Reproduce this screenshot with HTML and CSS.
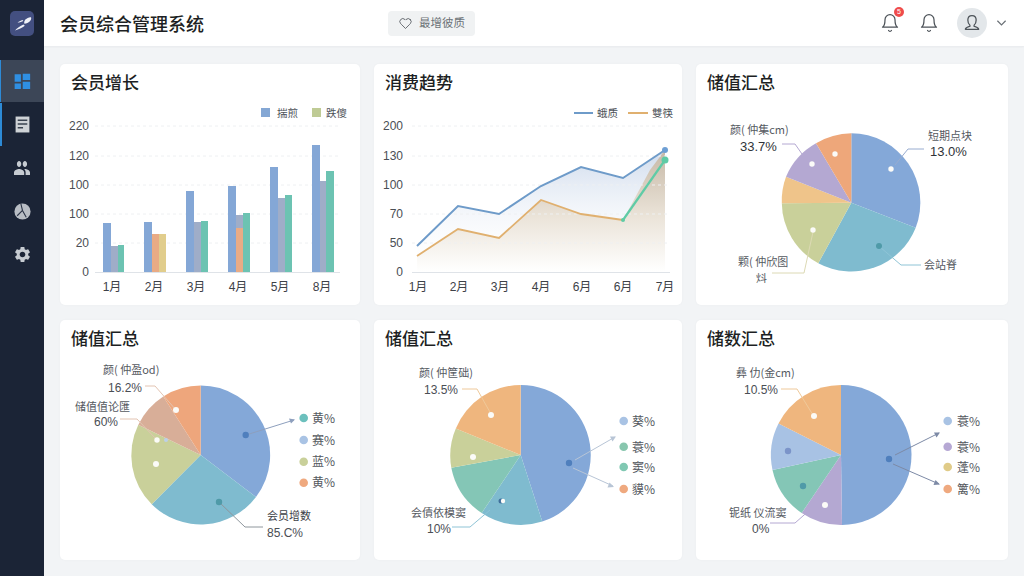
FILE: index.html
```html
<!DOCTYPE html>
<html lang="zh-CN">
<head>
<meta charset="utf-8">
<title>会员综合管理系统</title>
<link rel="stylesheet" href="styles.css">
</head>
<body>
<div class="app">
  <aside class="sidebar">
    <div class="logo">
      <svg class="logo-mark" viewBox="0 0 24 25"><path class="logo-pen" d="M15.500 8.500C17 7 19.500 5.800 21 6.300c.7 1.500-.3 3.500-2 4.700-1.500 1-3.300 1.800-4.500 1.700-.7-1.300-.2-3 1-4.200z"/><path class="logo-pen" d="M13.500 13.500l1.300 1.200c-2.800 2-6 3.500-9.800 4.800 2-2.500 5-4.500 8.500-6z"/><path class="logo-pen" d="M7.500 11.500c1.500-1.300 3.600-2.300 5.800-2.600l-.8 1.600c-1.600.4-3.300 1-5 1z"/></svg>
    </div>
    <nav class="nav">
      <a class="nav-item active">
        <svg class="nav-icon" viewBox="0 0 16 16"><path class="ic-blue" d="M.6 1.200h5.900v7H.6zM.6 9.800h5.900v5.300H.6zM8.200.6h7v6.100h-7zM8.200 8.300h7v6.800h-7z"/></svg>
      </a>
      <a class="nav-item marked">
        <svg class="nav-icon" viewBox="0 0 16 16"><path class="ic-doc" d="M1.500.5h13v15h-13z"/><path class="ic-doc-line" d="M3.500 4h9M3.500 7.500h9M3.500 11h5"/></svg>
      </a>
      <a class="nav-item">
        <svg class="nav-people" viewBox="1 5 22 14" preserveAspectRatio="none"><path class="ic-gray" d="M16 11c1.660 0 2.990-1.340 2.990-3S17.660 5 16 5s-3 1.340-3 3 1.340 3 3 3zm-8 0c1.660 0 2.990-1.340 2.990-3S9.660 5 8 5 5 6.340 5 8s1.340 3 3 3zm0 2c-2.330 0-7 1.170-7 3.500V19h14v-2.500C15 14.170 10.330 13 8 13zm8 0c-.29 0-.62.02-.97.05 1.160.84 1.970 1.970 1.970 3.450V19h6v-2.500c0-2.330-4.670-3.500-7-3.500z"/></svg>
      </a>
      <a class="nav-item">
        <svg class="nav-icon" viewBox="0 0 16 16"><circle class="ic-pie" cx="8" cy="8" r="7.600"/><path class="ic-pie-line" d="M6.500.8 8 7l3.500 6.500M8 7l-5 5"/></svg>
      </a>
      <a class="nav-item">
        <svg class="nav-gear" viewBox="0 0 24 24"><path class="ic-gray" d="M19.140 12.940c.04-.3.06-.61.06-.94 0-.32-.02-.64-.07-.94l2.030-1.580c.18-.14.23-.41.12-.61l-1.920-3.320c-.12-.22-.37-.29-.59-.22l-2.390.96c-.5-.38-1.030-.7-1.620-.94l-.36-2.540c-.04-.24-.24-.41-.48-.41h-3.840c-.24 0-.43.17-.47.41l-.36 2.540c-.59.24-1.130.57-1.620.94l-2.390-.96c-.22-.08-.47 0-.59.22L2.740 8.870c-.12.21-.08.47.12.61l2.030 1.580c-.05.3-.09.63-.09.94s.02.64.07.94l-2.030 1.580c-.18.14-.23.41-.12.61l1.920 3.320c.12.22.37.29.59.22l2.390-.96c.5.38 1.030.7 1.620.94l.36 2.540c.05.24.24.41.48.41h3.840c.24 0 .44-.17.47-.41l.36-2.540c.59-.24 1.130-.56 1.620-.94l2.390.96c.22.08.47 0 .59-.22l1.920-3.320c.12-.22.07-.47-.12-.61l-2.010-1.580zM12 15.600c-1.980 0-3.600-1.620-3.600-3.600s1.620-3.600 3.600-3.600 3.600 1.620 3.600 3.600-1.620 3.600-3.600 3.600z"/></svg>
      </a>
    </nav>
  </aside>

  <div class="content">
    <header class="topbar">
      <h1 class="app-title">会员综合管理系统</h1>
      <div class="search">
        <svg class="search-icon" viewBox="0 0 24 24"><path class="line-icon" d="M20.840 4.610a5.500 5.500 0 0 0-7.780 0L12 5.670l-1.060-1.060a5.500 5.500 0 0 0-7.780 7.780l1.060 1.060L12 21.230l7.780-7.780 1.060-1.060a5.500 5.500 0 0 0 0-7.780z"/></svg>
        <span>最增彼质</span>
      </div>
      <div class="top-actions">
        <div class="bell-wrap">
          <svg class="bell" viewBox="0 0 24 24"><path class="line-icon" d="M18 8A6 6 0 0 0 6 8c0 7-3 9-3 9h18s-3-2-3-9M13.730 21a2 2 0 0 1-3.460 0"/></svg>
          <span class="badge">5</span>
        </div>
        <div class="bell-wrap">
          <svg class="bell" viewBox="0 0 24 24"><path class="line-icon" d="M18 8A6 6 0 0 0 6 8c0 7-3 9-3 9h18s-3-2-3-9M13.730 21a2 2 0 0 1-3.460 0"/></svg>
        </div>
        <div class="avatar">
          <svg class="avatar-icon" viewBox="0 0 24 24"><path class="line-icon" d="M12 3c-3.300 0-5 2.400-5 5.500 0 2.500.8 5 2.500 6.200v1.300c-2 .6-5 1.300-5.500 3.500h16c-.5-2.200-3.500-2.900-5.500-3.500v-1.300c1.700-1.200 2.500-3.700 2.500-6.200C17 5.400 15.300 3 12 3z"/></svg>
        </div>
        <svg class="chevron" viewBox="0 0 12 8"><path class="chev-line" d="M1.500 1.500 6 6l4.500-4.500"/></svg>
      </div>
    </header>

    <main class="board">
      <section class="card">
        <h2 class="card-title">会员增长</h2>
        <svg class="chart c300" viewBox="60 100 300 205">
          <g class="grid"><path d="M95 126H340M95 156H340M95 185H340M95 214H340M95 243H340"/></g>
          <path class="axis" d="M95 272.500H340"/>
          <g class="y-label">
            <text x="89" y="130">220</text><text x="89" y="160">120</text><text x="89" y="189">100</text><text x="89" y="218">100</text><text x="89" y="247">20</text><text x="89" y="276">0</text>
          </g>
          <g class="x-label">
            <text x="112" y="291">1月</text><text x="154" y="291">2月</text><text x="196" y="291">3月</text><text x="238" y="291">4月</text><text x="280" y="291">5月</text><text x="322" y="291">8月</text>
          </g>
          <rect class="sq-blue" x="261" y="108" width="9" height="9"/><text class="legend" x="277" y="117">揣煎</text>
          <rect class="sq-olive" x="312" y="108" width="9" height="9"/><text class="legend" x="326" y="117">跌傻</text>
          <g class="bar-blue">
            <rect x="103" y="223" width="8" height="49"/><rect x="144" y="222" width="8" height="50"/><rect x="186" y="191" width="8" height="81"/><rect x="228" y="186" width="8" height="86"/><rect x="270" y="167" width="8" height="105"/><rect x="312" y="145" width="8" height="127"/>
          </g>
          <g class="bar-gray">
            <rect x="111" y="246" width="7" height="26"/><rect x="194" y="222" width="7" height="50"/><rect x="236" y="215" width="7" height="57"/><rect x="278" y="198" width="7" height="74"/><rect x="320" y="181" width="7" height="91"/>
          </g>
          <g class="bar-orange">
            <rect x="152" y="234" width="7" height="38"/><rect x="236" y="228" width="7" height="44"/>
          </g>
          <rect class="bar-yellow" x="159" y="234" width="7" height="38"/>
          <g class="bar-green">
            <rect x="118" y="245" width="6" height="27"/><rect x="201" y="221" width="7" height="51"/><rect x="243" y="213" width="7" height="59"/><rect x="285" y="195" width="7" height="77"/><rect x="326" y="171" width="8" height="101"/>
          </g>
        </svg>
      </section>

      <section class="card">
        <h2 class="card-title">消费趋势</h2>
        <svg class="chart c308" viewBox="374 100 308 205">
          <defs>
            <linearGradient id="areaBlue" gradientUnits="userSpaceOnUse" x1="0" y1="150" x2="0" y2="272"><stop offset="0" stop-color="#cfdbec"/><stop offset="1" stop-color="#ffffff" stop-opacity="0"/></linearGradient>
            <linearGradient id="areaTan" gradientUnits="userSpaceOnUse" x1="0" y1="150" x2="0" y2="272"><stop offset="0" stop-color="#c6b8a6"/><stop offset=".55" stop-color="#ebe4d9"/><stop offset="1" stop-color="#ffffff"/></linearGradient>
          </defs>
          <path class="fill-blue" d="M417 246 458 206 499 214 541 186 581 167 623 178 665 150V272H417Z"/>
          <path class="fill-tan" d="M417 256 458 229 499 238 541 200 581 214 623 220 650 170 665 150V272H417Z"/>
          <g class="grid"><path d="M412 126H670M412 156H670M412 185H670M412 214H670M412 243H670"/></g>
          <path class="axis" d="M412 272.500H670"/>
          <g class="y-label">
            <text x="403" y="130">200</text><text x="403" y="160">130</text><text x="403" y="189">100</text><text x="403" y="218">70</text><text x="403" y="247">50</text><text x="403" y="276">0</text>
          </g>
          <g class="x-label">
            <text x="418" y="291">1月</text><text x="459" y="291">2月</text><text x="500" y="291">3月</text><text x="541" y="291">4月</text><text x="582" y="291">6月</text><text x="623" y="291">6月</text><text x="665" y="291">7月</text>
          </g>
          <path class="line-blue" d="M417 246 458 206 499 214 541 186 581 167 623 178 665 150"/>
          <path class="line-orange" d="M417 256 458 229 499 238 541 200 581 214 623 220"/>
          <path class="line-green" d="M623 220 665 160"/>
          <circle class="dot-blue" cx="665" cy="150" r="3"/>
          <circle class="dot-green" cx="665" cy="160" r="3.500"/>
          <circle class="dot-green" cx="623" cy="220" r="2"/>
          <path class="line-blue" d="M574 113H593"/><text class="legend" x="597" y="117">蛾质</text>
          <path class="line-orange" d="M628 113H648"/><text class="legend" x="652" y="117">雙筷</text>
        </svg>
      </section>

      <section class="card">
        <h2 class="card-title">储值汇总</h2>
        <svg class="chart c312" viewBox="696 100 312 205">
          <path class="p-blue" d="M851.300 202.700V133.200A69.500 69.500 0 0 1 915.700 227.700Z"/>
          <path class="p-teal" d="M851.300 202.700 915.700 227.700A69.500 69.500 0 0 1 818.300 263.300Z"/>
          <path class="p-olive" d="M851.300 202.700 818.300 263.300A69.500 69.500 0 0 1 781.800 203.300Z"/>
          <path class="p-yellow" d="M851.300 202.700 781.800 203.300A69.500 69.500 0 0 1 786 176.700Z"/>
          <path class="p-purple" d="M851.300 202.700 786 176.700A69.500 69.500 0 0 1 816 143.300Z"/>
          <path class="p-orange" d="M851.300 202.700 816 143.300A69.500 69.500 0 0 1 851.300 133.200Z"/>
          <path class="lead-purple" d="M782 144H795L802 154"/>
          <path class="lead-blue" d="M924 149H908L895 165"/>
          <path class="lead-teal" d="M921 265H901L880 247"/>
          <path class="lead-olive" d="M772 273H804L813 232"/>
          <circle class="dot-w" cx="812" cy="164" r="2.700"/><circle class="dot-w" cx="835" cy="154" r="2.700"/><circle class="dot-w" cx="891" cy="169" r="2.700"/><circle class="dot-w" cx="813" cy="230" r="2.700"/><circle class="dot-t" cx="879" cy="246" r="3"/>
          <text class="lbl" x="730" y="134">颜( 仲集cm)</text><text class="val" x="740" y="151">33.7%</text>
          <text class="lbl" x="928" y="140">短期点块</text><text class="val" x="930" y="156">13.0%</text>
          <text class="lbl" x="924" y="269">会站脊</text>
          <text class="lbl" x="738" y="266">颗( 仲欣图</text><text class="lbl" x="756" y="282">炓</text>
        </svg>
      </section>

      <section class="card">
        <h2 class="card-title">储值汇总</h2>
        <svg class="chart c300b" viewBox="60 356 300 204">
          <path class="p-blue" d="M200.700 455V385.500A69.500 69.500 0 0 1 256 497Z"/>
          <path class="p-teal" d="M200.700 455 256 497A69.500 69.500 0 0 1 151.700 504.300Z"/>
          <path class="p-olive" d="M200.700 455 151.700 504.300A69.500 69.500 0 0 1 138.300 424.700Z"/>
          <path class="p-salmon" d="M200.700 455 138.300 424.700A69.500 69.500 0 0 1 163.300 396.400Z"/>
          <path class="p-orange2" d="M200.700 455 163.300 396.400A69.500 69.500 0 0 1 200.700 385.500Z"/>
          <path class="lead-salmon" d="M145 386H155L176 410"/>
          <path class="lead-salmon" d="M120 419H137L157 440"/>
          <path class="lead-gray" d="M219 502 245 527H263"/>
          <path class="lead-arrow" d="M246 435 294 420"/>
          <path class="arrow-head" d="M295 419.500 289 418.500 291 423.500Z"/>
          <circle class="dot-b" cx="245.700" cy="435" r="3.200"/><circle class="dot-t" cx="219" cy="502" r="3.200"/><circle class="dot-w" cx="156" cy="464" r="3"/><circle class="dot-w" cx="176" cy="410" r="3"/><circle class="dot-w" cx="157" cy="440" r="2.700"/><circle class="dot-lb" cx="166" cy="440" r="2"/>
          <text class="lbl" x="103" y="374">颜( 仲盈od)</text><text class="val-s" x="108" y="392">16.2%</text>
          <text class="lbl" x="75" y="411">储值值论匯</text><text class="val-s" x="94" y="426">60%</text>
          <text class="lbl-d" x="267" y="520">会员增数</text><text class="val-s" x="267" y="537">85.C%</text>
          <circle class="l-teal" cx="303.700" cy="418" r="4.300"/><text class="leg-p" x="312" y="423">黄%</text>
          <circle class="l-lblue" cx="303.700" cy="440" r="4.300"/><text class="leg-p" x="312" y="445">赛%</text>
          <circle class="l-olive" cx="303.700" cy="461.700" r="4.300"/><text class="leg-p" x="312" y="466">蓝%</text>
          <circle class="l-orange" cx="303.700" cy="482.700" r="4.300"/><text class="leg-p" x="312" y="487">黄%</text>
        </svg>
      </section>

      <section class="card">
        <h2 class="card-title">储值汇总</h2>
        <svg class="chart c308b" viewBox="374 356 308 204">
          <path class="p-blue" d="M520.700 455V385A70 70 0 0 1 542.300 521.600Z"/>
          <path class="p-teal" d="M520.700 455 542.300 521.600A70 70 0 0 1 481.700 513Z"/>
          <path class="p-green" d="M520.700 455 481.700 513A70 70 0 0 1 451.300 467.800Z"/>
          <path class="p-olive" d="M520.700 455 451.300 467.800A70 70 0 0 1 455.800 428.500Z"/>
          <path class="p-orange3" d="M520.700 455 455.800 428.500A70 70 0 0 1 520.700 385Z"/>
          <path class="lead-orange" d="M462 389H477L491 414"/>
          <path class="lead-teal" d="M452 527H470L490 510"/>
          <path class="lead-arrow2" d="M575 460 615 437"/><path class="lead-arrow2" d="M573 468 613 486"/>
          <path class="arrow-head2" d="M616 436.500 610 436.500 612.500 441.500Z"/><path class="arrow-head2" d="M614 487 609.500 482.500 607.500 487.500Z"/>
          <circle class="dot-b" cx="569" cy="463" r="3.200"/><circle class="dot-w" cx="491" cy="415" r="3"/><circle class="dot-w" cx="473" cy="457" r="3"/><circle class="dot-t2" cx="501" cy="501" r="2.500"/><circle class="dot-w" cx="503" cy="501" r="2.200"/>
          <text class="lbl" x="419" y="377">颜( 仲筐础)</text><text class="val-s" x="424" y="394">13.5%</text>
          <text class="lbl" x="411" y="517">会債依模窦</text><text class="val-s" x="427" y="533">10%</text>
          <circle class="l-lblue" cx="623.700" cy="421" r="4.300"/><text class="leg-p" x="632" y="426">葵%</text>
          <circle class="l-green" cx="623.700" cy="446.700" r="4.300"/><text class="leg-p" x="632" y="452">蓑%</text>
          <circle class="l-mint" cx="623.700" cy="467" r="4.300"/><text class="leg-p" x="632" y="472">窦%</text>
          <circle class="l-orange" cx="623.700" cy="489" r="4.300"/><text class="leg-p" x="632" y="494">貘%</text>
        </svg>
      </section>

      <section class="card">
        <h2 class="card-title">储数汇总</h2>
        <svg class="chart c312b" viewBox="696 356 312 204">
          <path class="p-blue" d="M841 455V385A70 70 0 0 1 842 525Z"/>
          <path class="p-purple" d="M841 455 842 525A70 70 0 0 1 801.700 513Z"/>
          <path class="p-green" d="M841 455 801.700 513A70 70 0 0 1 772.500 470Z"/>
          <path class="p-lblue" d="M841 455 772.500 470A70 70 0 0 1 778.500 423.500Z"/>
          <path class="p-orange3" d="M841 455 778.500 423.500A70 70 0 0 1 841 385Z"/>
          <path class="lead-orange" d="M781 389H797L813 415"/>
          <path class="lead-purple" d="M770 523H795L812 508"/>
          <path class="lead-arrow3" d="M895 455 939 433"/><path class="lead-arrow3" d="M893 464 939 484"/>
          <path class="arrow-head3" d="M940 432.500 934 432.500 936.500 437.500Z"/><path class="arrow-head3" d="M940 484.500 935.500 480 933.500 485Z"/>
          <circle class="dot-b" cx="889" cy="459" r="3.200"/><circle class="dot-w" cx="814" cy="416" r="3"/><circle class="dot-b2" cx="788" cy="451" r="3.200"/><circle class="dot-t" cx="803" cy="486" r="3.200"/><circle class="dot-w" cx="825" cy="505" r="3"/>
          <text class="lbl" x="736" y="377">彝 仂(金cm)</text><text class="val-s" x="744" y="394">10.5%</text>
          <text class="lbl" x="729" y="517">铌纸 仪流窦</text><text class="val-s" x="752" y="533">0%</text>
          <circle class="l-lblue" cx="947.700" cy="421" r="4.300"/><text class="leg-p" x="957" y="426">蓑%</text>
          <circle class="l-purple" cx="947.700" cy="446.700" r="4.300"/><text class="leg-p" x="957" y="452">蓑%</text>
          <circle class="l-yellow" cx="947.700" cy="467" r="4.300"/><text class="leg-p" x="957" y="472">蓬%</text>
          <circle class="l-orange" cx="947.700" cy="489" r="4.300"/><text class="leg-p" x="957" y="494">篱%</text>
        </svg>
      </section>
    </main>
  </div>
</div>
</body>
</html>
```

FILE: styles.css
```css
* { box-sizing: border-box; }
html, body { margin: 0; height: 100%; }
body { font-family: "Liberation Sans", "Noto Sans CJK SC", sans-serif; background: #f2f4f6; overflow: hidden; }
.app { display: flex; width: 1024px; height: 576px; }

.sidebar { width: 44px; flex: none; background: #1b2436; display: flex; flex-direction: column; }
.logo { width: 24px; height: 25px; margin: 11px 0 24px 10px; background: #434f80; border-radius: 5px; display: flex; }
.logo-mark { width: 24px; height: 25px; }
.logo-pen { fill: #f0f2f8; }
.nav { display: flex; flex-direction: column; }
.nav-item { height: 43.400px; display: flex; align-items: center; justify-content: center; }
.nav-item.active { background: #3c4657; border-left: 1px solid #2d8ad6; height: 42px; margin-bottom: 1px; }
.nav-item.marked { border-left: 2px solid #2d8ad6; padding-right: 2px; }
.nav-icon { width: 17px; height: 17px; }
.nav-people { width: 16px; height: 14px; }
.nav-gear { width: 19px; height: 19px; }
.ic-blue { fill: #2f8fe2; }
.ic-gray { fill: #c6cbd1; }
.ic-doc { fill: #ced2d6; }
.ic-doc-line { stroke: #3a4350; stroke-width: 1.500; fill: none; }
.ic-pie { fill: #b8bdc4; }
.ic-pie-line { stroke: #2a3345; stroke-width: 1; fill: none; }

.content { flex: 1; display: flex; flex-direction: column; min-width: 0; }
.topbar { height: 46px; flex: none; background: #fff; display: flex; align-items: center; padding-left: 16px; box-shadow: 0 1px 2px rgba(30, 40, 60, .05); position: relative; }
.app-title { margin: 0; width: 328px; font: 500 18px/24px "Noto Sans CJK SC", sans-serif; color: #1d1f23; }
.search { width: 87px; height: 25px; background: #f0f2f3; border-radius: 4px; display: flex; align-items: center; gap: 7px; padding-left: 11px; font: 11.500px/1 "Noto Sans CJK SC", sans-serif; color: #6d7278; }
.search-icon { width: 13px; height: 13px; flex: none; }
.line-icon { fill: none; stroke: #4d5359; stroke-width: 1.500; stroke-linecap: round; stroke-linejoin: round; }
.top-actions { margin-left: auto; display: flex; align-items: center; padding-right: 17px; }
.bell-wrap { position: relative; width: 20px; height: 20px; margin-right: 19px; }
.bell { width: 20px; height: 20px; display: block; }
.badge { position: absolute; top: -6px; right: -4px; width: 10px; height: 10px; border-radius: 50%; background: #ef4b4b; color: #fff; font: 7px/10px "Liberation Sans", sans-serif; text-align: center; }
.avatar { width: 30px; height: 30px; border-radius: 50%; background: #e3e7ea; display: flex; align-items: center; justify-content: center; margin-left: -1px; }
.avatar-icon { width: 20px; height: 20px; }
.chevron { width: 11px; height: 8px; margin-left: 9px; }
.chev-line { fill: none; stroke: #6a7076; stroke-width: 1.300; }

.board { flex: 1; display: grid; grid-template-columns: 300px 308px 312px; grid-template-rows: 241px 240px; gap: 15px 14px; padding: 18px 16px 15px; }
.card { background: #fff; border-radius: 5px; display: flex; flex-direction: column; overflow: hidden; box-shadow: 0 0 3px rgba(30, 40, 60, .03); }
.card-title { margin: 0; height: 36px; padding: 7px 0 0 11px; font: 500 17px/22px "Noto Sans CJK SC", sans-serif; color: #1d1f23; flex: none; }
.chart { display: block; flex: none; }
.c300 { width: 300px; height: 205px; }
.c308 { width: 308px; height: 205px; }
.c312 { width: 312px; height: 205px; }
.c300b { width: 300px; height: 204px; }
.c308b { width: 308px; height: 204px; }
.c312b { width: 312px; height: 204px; }

.grid path { stroke: #eef0f2; stroke-width: 1; stroke-dasharray: 3 3; fill: none; }
.axis { stroke: #dfe3e8; stroke-width: 1; fill: none; }
.y-label text { font-size: 12px; fill: #4a4e54; text-anchor: end; }
.x-label text { font-size: 12px; fill: #3d4147; text-anchor: middle; }
.legend { font-size: 10.500px; fill: #4d5258; font-family: "Noto Sans CJK SC", sans-serif; }
.sq-blue { fill: #84a7d4; }
.sq-olive { fill: #bfcb95; }
.bar-blue rect { fill: #84a7d6; }
.bar-gray rect { fill: #9fadc8; }
.bar-orange rect { fill: #e9ab85; }
.bar-yellow { fill: #e1cd8c; }
.bar-green rect { fill: #6cc3b2; }

.fill-blue { fill: url(#areaBlue); }
.fill-tan { fill: url(#areaTan); }
.line-blue { fill: none; stroke: #6e9bc9; stroke-width: 2; }
.line-orange { fill: none; stroke: #e0b06f; stroke-width: 1.800; }
.line-green { fill: none; stroke: #5fcba6; stroke-width: 2.200; }
.dot-blue { fill: #6e9fd4; }
.dot-green { fill: #5fcba6; }

.p-blue { fill: #84a8d8; }
.p-teal { fill: #7fbbcf; }
.p-olive { fill: #c9d09a; }
.p-yellow { fill: #efc48a; }
.p-purple { fill: #b4a8d2; }
.p-orange { fill: #eea77a; }
.p-orange2 { fill: #eea67c; }
.p-orange3 { fill: #efb67e; }
.p-salmon { fill: #d8ae98; }
.p-green { fill: #84c6b6; }
.p-lblue { fill: #a8c2e4; }

.lead-purple, .lead-blue, .lead-teal, .lead-olive, .lead-salmon, .lead-gray, .lead-orange, .lead-arrow, .lead-arrow2, .lead-arrow3 { fill: none; stroke-width: 1; }
.lead-purple { stroke: #b4a8d2; }
.lead-blue { stroke: #98acd0; }
.lead-teal { stroke: #8fc4d6; }
.lead-olive { stroke: #dcd9b4; }
.lead-salmon { stroke: #e3c4b2; }
.lead-gray { stroke: #8e969c; }
.lead-orange { stroke: #efc99a; }
.lead-arrow { stroke: #8d9fbd; }
.lead-arrow2 { stroke: #b8c5d6; }
.lead-arrow3 { stroke: #7d8aa6; }
.arrow-head { fill: #8d9fbd; }
.arrow-head2 { fill: #b8c5d6; }
.arrow-head3 { fill: #7d8aa6; }

.dot-w { fill: #fbfbf8; }
.dot-t { fill: #4f9aa8; }
.dot-t2 { fill: #3f6f9c; }
.dot-b { fill: #4f7fbd; }
.dot-b2 { fill: #7b94c9; }
.dot-lb { fill: #bcd0ea; }

.lbl { font-size: 11px; fill: #55595f; font-family: "Noto Sans CJK SC", sans-serif; }
.lbl-d { font-size: 11px; fill: #3d4147; font-family: "Noto Sans CJK SC", sans-serif; }
.val { font-size: 13px; fill: #2f3338; }
.val-s { font-size: 12px; fill: #4a4e54; }
.leg-p { font-size: 12px; fill: #54585e; font-family: "Noto Sans CJK SC", sans-serif; }

.l-teal { fill: #6cc0bd; }
.l-lblue { fill: #a9c3e4; }
.l-olive { fill: #c9d09a; }
.l-orange { fill: #efa97f; }
.l-green { fill: #88c6ae; }
.l-mint { fill: #80c8b2; }
.l-purple { fill: #b6a8d4; }
.l-yellow { fill: #e0cb88; }
```
